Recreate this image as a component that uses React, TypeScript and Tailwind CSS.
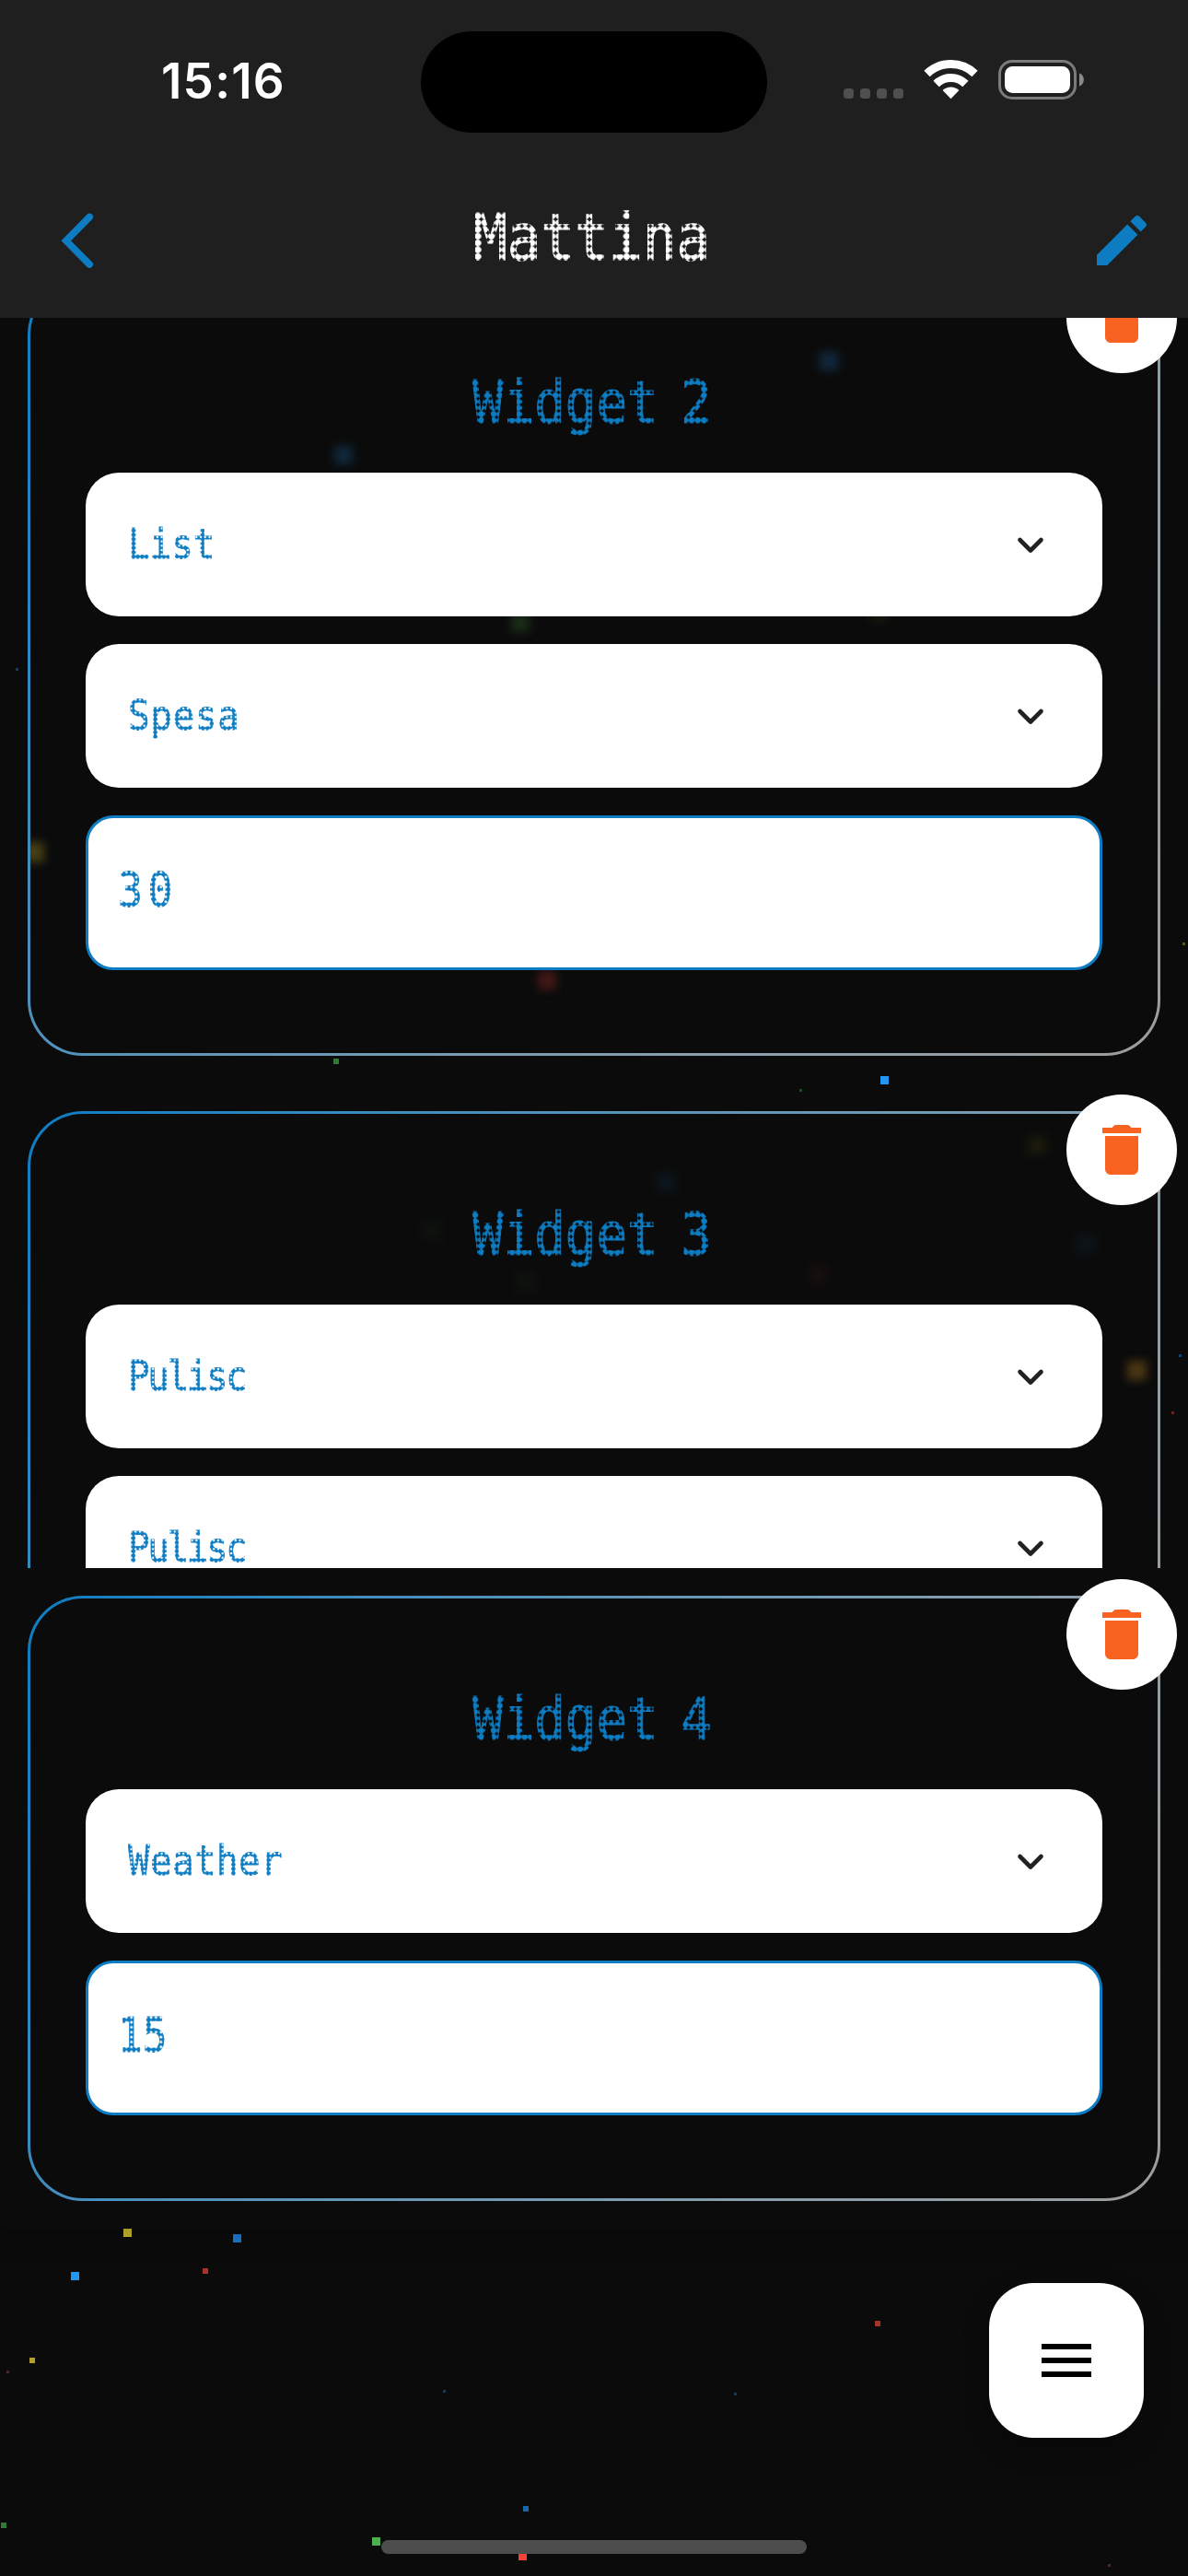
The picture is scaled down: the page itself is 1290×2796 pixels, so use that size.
import React from "react";

type Speck = { x: number; y: number; s: number; c: string };

const SPECKS: Speck[] = [
  { x: 18.5, y: 726.5, s: 3, c: "#163e60" },
  { x: 1285.5, y: 1024.5, s: 3, c: "#5d561c" },
  { x: 365, y: 1152, s: 6, c: "#307a34" },
  { x: 960.5, y: 1172.5, s: 9, c: "#2196f3" },
  { x: 869.5, y: 1183.5, s: 3, c: "#204a22" },
  { x: 1281.5, y: 1471.5, s: 3, c: "#14456f" },
  { x: 1273.5, y: 1533.5, s: 3, c: "#6b2420" },
  { x: 138.5, y: 2423.5, s: 9, c: "#c9b82f" },
  { x: 257.5, y: 2429.5, s: 9, c: "#1c7ad0" },
  { x: 81.5, y: 2470.5, s: 9, c: "#2196f3" },
  { x: 223, y: 2465, s: 6, c: "#a9322b" },
  { x: 35, y: 2562, s: 6, c: "#afa02b" },
  { x: 8.5, y: 2574.5, s: 3, c: "#5a201c" },
  { x: 482.5, y: 2595.5, s: 3, c: "#143a59" },
  { x: 953, y: 2522, s: 6, c: "#a9322b" },
  { x: 798.5, y: 2598.5, s: 3, c: "#143a59" },
  { x: 571, y: 2723, s: 6, c: "#1a67a8" },
  { x: 4, y: 2741, s: 6, c: "#327a35" },
  { x: 408.5, y: 2758.5, s: 9, c: "#4caf50" },
  { x: 567.5, y: 2774.5, s: 9, c: "#f44336" },
  { x: 1204.5, y: 2784.5, s: 3, c: "#5a201c" },
];

// Coordinates are relative to the card's inner panel.
const GLOWS_2: Speck[] = [
  { x: 340, y: 188, s: 20, c: "#10283c" },
  { x: 867, y: 86, s: 20, c: "#10283c" },
  { x: 532, y: 370, s: 20, c: "#1a2c18" },
  { x: 921, y: 359, s: 20, c: "#17170d" },
  { x: 4, y: 619, s: 22, c: "#453e16" },
  { x: 561, y: 758, s: 20, c: "#421816" },
];
const GLOWS_3: Speck[] = [
  { x: 1093, y: 34, s: 20, c: "#1a1a0d" },
  { x: 690, y: 74, s: 20, c: "#0d161e" },
  { x: 436, y: 126, s: 20, c: "#0d130d" },
  { x: 538, y: 182, s: 20, c: "#0e130e" },
  { x: 856, y: 174, s: 20, c: "#160f0d" },
  { x: 1146, y: 141, s: 20, c: "#0d141a" },
  { x: 1201, y: 278, s: 21, c: "#4a3614" },
];

function Specks({ items, glow }: { items: Speck[]; glow?: boolean }) {
  return (
    <>
      {items.map((p) => (
        <i
          key={`${p.x}-${p.y}`}
          className={glow ? "absolute blur-[5px]" : "absolute"}
          style={{ left: p.x - p.s / 2, top: p.y - p.s / 2, width: p.s, height: p.s, background: p.c }}
        />
      ))}
    </>
  );
}

// Text seen through a grid of round dots, like an LED panel.
function DotText({ children, className = "", origin = "origin-center" }: { children: string; className?: string; origin?: string }) {
  return (
    <span
      className={`inline-block whitespace-nowrap leading-[1.2] font-['DejaVu_Sans_Mono',monospace] [mask-image:radial-gradient(circle_closest-side,#000_86%,transparent_108%)] [mask-size:0.105em_0.105em] [mask-position:0.079em_0em] ${className}`}
    >
      <span className={`block scale-x-[0.872] [-webkit-text-stroke:0.018em_currentColor] ${origin}`}>{children}</span>
    </span>
  );
}

function Select({ label, tracking = "" }: { label: string; tracking?: string }) {
  return (
    <button className="flex h-[156px] w-full shrink-0 items-center justify-between rounded-[36px] bg-white pr-[60px] pl-[46px] text-[#0d7cc2]">
      <DotText className={`text-[45px] ${tracking}`} origin="origin-left">{label}</DotText>
      <svg viewBox="0 0 36 36" className="h-9 w-9" fill="none" stroke="#222" strokeWidth="4.6" strokeLinecap="round" strokeLinejoin="round">
        <path d="M6.5 13 18 24.5 29.5 13" />
      </svg>
    </button>
  );
}

function Field({ value = "", tracking = "" }: { value?: string; tracking?: string }) {
  return (
    <div className="flex h-[168px] w-full shrink-0 items-center rounded-[30px] border-[3px] border-[#0d7cc2] bg-white pb-[5px] pl-[32px] text-[#0d7cc2]">
      {value && <DotText className={`text-[51px] ${tracking}`} origin="origin-left">{value}</DotText>}
    </div>
  );
}

function Card({ title, angle, glows = [], children }: { title: string; angle: string; glows?: Speck[]; children: React.ReactNode }) {
  return (
    <section className={`relative shrink-0 rounded-[60px] p-[3px] ${angle}`}>
      <div className="relative flex flex-col overflow-hidden rounded-[57px] bg-[#0b0b0b] px-[60px] pb-[90px]">
        <Specks items={glows} glow />
        <h2 className="relative flex h-[207px] items-center justify-center pt-[56px] pr-[4px] text-[#0d7cc2]">
          <DotText className="text-[64px] [word-spacing:-0.16em]">{title}</DotText>
        </h2>
        <div className="relative flex flex-col gap-[30px]">{children}</div>
      </div>
      <button aria-label="Delete" className="absolute -top-[18px] -right-[18px] flex h-[120px] w-[120px] items-center justify-center rounded-full bg-white">
        <svg viewBox="0 0 24 24" className="h-[72px] w-[72px]" fill="#f86321">
          <path d="M6 19c0 1.1.9 2 2 2h8c1.1 0 2-.9 2-2V7H6v12zM15.5 4l-.71-.71c-.18-.18-.44-.29-.7-.29H9.91c-.26 0-.52.11-.7.29L8.5 4H5v2h14V4h-3.5z" />
        </svg>
      </button>
    </section>
  );
}

const TALL = "bg-[linear-gradient(124.4deg,#0d7cc2,#458ebd_25%,#6d99b5_50%,#8c9fab_75%,#9d9d9d)]";
const SHORT = "bg-[linear-gradient(118.1deg,#0d7cc2,#458ebd_25%,#6d99b5_50%,#8c9fab_75%,#9d9d9d)]";

function StatusBar() {
  return (
    <div className="flex h-[178px] items-start justify-between pt-[34px]">
      <div className="flex h-[110px] w-[457px] items-center pl-[175px] font-['Inter',sans-serif] text-[53px] leading-none font-semibold tracking-[1.2px] text-white">
        <span className="pb-[1px]">15:16</span>
      </div>
      <div className="h-[110px] w-[376px] rounded-full bg-black" />
      <div className="w-[457px]">
        <svg viewBox="0 0 457 110" className="h-[110px] w-[457px]">
          <g fill="#4f4f4f">
            <rect x="83" y="62" width="11" height="11" rx="3.500" />
            <rect x="101" y="62" width="11" height="11" rx="3.500" />
            <rect x="119" y="62" width="11" height="11" rx="3.500" />
            <rect x="137" y="62" width="11" height="11" rx="3.500" />
          </g>
          <g fill="none" stroke="#fff" strokeWidth="9">
            <path d="M173.500 46a37.500 37.500 0 0 1 52 0" />
            <path d="M183.600 57a22.500 22.500 0 0 1 31.800 0" />
          </g>
          <path d="M199.500 73.300 190.600 64a13 13 0 0 1 17.800 0z" fill="#fff" />
          <rect x="252.500" y="32.500" width="82" height="40" rx="13.500" fill="none" stroke="#7b7b7b" strokeWidth="3" />
          <rect x="258" y="38" width="71" height="29" rx="8.500" fill="#fff" />
          <path d="M339 45.500c6.500 2 6.500 12 0 14z" fill="#8a8a8a" />
        </svg>
      </div>
    </div>
  );
}

export default function App() {
  return (
    <main className="relative flex h-[2796px] w-[1290px] flex-col overflow-hidden bg-[#0b0b0b]">
      <Specks items={SPECKS} />

      <header className="relative h-[345px] shrink-0 bg-[#1f1f1f]">
        <StatusBar />
        <div className="flex h-[160px] items-center justify-between pr-[36px] pl-[49px]">
          <svg viewBox="0 0 72 72" className="mt-[5px] h-[72px] w-[72px]" fill="none" stroke="#0d7cc2" strokeWidth="7.600" strokeLinecap="round" strokeLinejoin="miter">
            <path d="M48.200 10.500 22.800 36.300 48.200 62" />
          </svg>
          <h1 className="pr-[18px] text-white">
            <DotText className="text-[70px]">Mattina</DotText>
          </h1>
          <svg viewBox="0 0 24 24" className="mt-[5px] h-[72px] w-[72px]" fill="#0d7cc2">
            <path d="M3 17.250V21h3.750L17.810 9.940l-3.750-3.750L3 17.250zM20.710 7.040c.39-.39.39-1.020 0-1.410l-2.340-2.340c-.39-.39-1.020-.39-1.410 0l-1.830 1.830 3.750 3.750 1.830-1.830z" />
          </svg>
        </div>
      </header>

      <div className="relative h-[1357px] shrink-0 overflow-hidden">
        <div className="-mt-[42px] flex flex-col gap-[60px] px-[30px]">
          <Card title="Widget 2" angle={TALL} glows={GLOWS_2}>
            <Select label="List" />
            <Select label="Spesa" tracking="tracking-[0.018em]" />
            <Field value="30" tracking="tracking-[0.13em]" />
          </Card>
          <Card title="Widget 3" angle={TALL} glows={GLOWS_3}>
            <Select label="Pulisc" tracking="tracking-[-0.06em]" />
            <Select label="Pulisc" tracking="tracking-[-0.06em]" />
            <Field />
          </Card>
        </div>
      </div>

      <div className="relative h-[717px] shrink-0 bg-[#0b0b0b] px-[30px] pt-[30px] shadow-[0_6px_30px_rgba(0,0,0,0.25)] [clip-path:inset(0_0_-60px_0)]">
        <Card title="Widget 4" angle={SHORT}>
          <Select label="Weather" tracking="tracking-[0.01em]" />
          <Field value="15" />
        </Card>
      </div>

      <footer className="relative flex grow flex-col items-end pt-[59px] pr-[48px]">
        <button aria-label="Menu" className="flex h-[168px] w-[168px] items-center justify-center rounded-[48px] bg-white shadow-[0_12px_30px_rgba(0,0,0,0.3)]">
          <svg viewBox="0 0 24 24" className="h-[72px] w-[72px]" fill="#000">
            <path d="M3 18h18v-2H3v2zm0-5h18v-2H3v2zm0-7v2h18V6H3z" />
          </svg>
        </button>
        <div className="mt-[111px] mr-[366px] h-[15px] w-[462px] rounded-full bg-[#4d4d4d]" />
      </footer>
    </main>
  );
}
